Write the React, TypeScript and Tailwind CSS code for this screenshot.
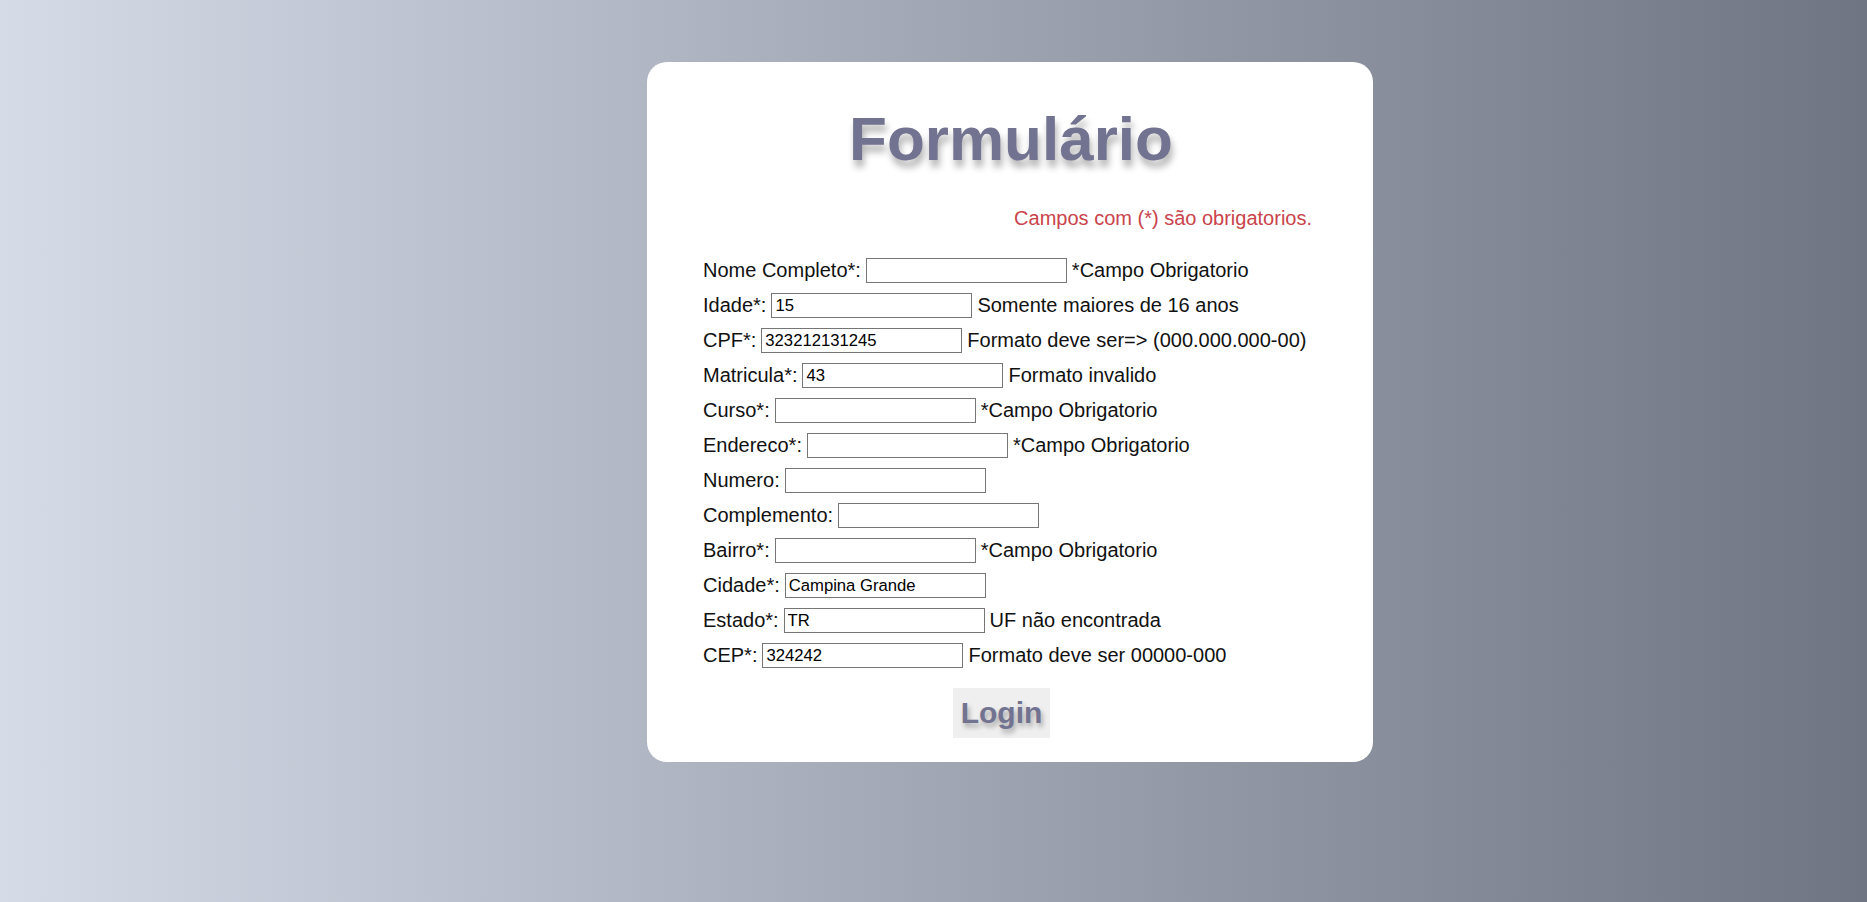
import * as React from "react";

type Field = {
  label: string;
  value?: string;
  msg?: string;
};

const fields: Field[] = [
  { label: "Nome Completo*:", msg: "*Campo Obrigatorio" },
  { label: "Idade*:", value: "15", msg: "Somente maiores de 16 anos" },
  { label: "CPF*:", value: "323212131245", msg: "Formato deve ser=> (000.000.000-00)" },
  { label: "Matricula*:", value: "43", msg: "Formato invalido" },
  { label: "Curso*:", msg: "*Campo Obrigatorio" },
  { label: "Endereco*:", msg: "*Campo Obrigatorio" },
  { label: "Numero:" },
  { label: "Complemento:" },
  { label: "Bairro*:", msg: "*Campo Obrigatorio" },
  { label: "Cidade*:", value: "Campina Grande" },
  { label: "Estado*:", value: "TR", msg: "UF não encontrada" },
  { label: "CEP*:", value: "324242", msg: "Formato deve ser 00000-000" },
];

export default function App() {
  return (
    <div className="min-h-screen w-full bg-gradient-to-r from-[#d5dce8] to-[#6f7582] pt-[62px] pb-[140px] font-['Liberation_Sans',Arial,sans-serif]">
      <div className="ml-[647px] w-[726px] h-[700px] rounded-[20px] bg-white pl-[56px] pr-[58px] pt-[42px] pb-[23px]">
        <h1 className="text-center text-[62px] font-bold leading-[69px] text-[#727291] pl-[4px] [text-shadow:2px_7px_7px_rgba(0,0,0,0.3)]">
          Formulário
        </h1>

        <p className="mt-[34px] text-right pr-[3px] text-[20px] leading-[23px] text-[#c9434b]">
          Campos com (*) são obrigatorios.
        </p>

        <form className="mt-[28px] flex flex-col gap-[10px]" onSubmit={(e) => e.preventDefault()}>
          {fields.map((f) => (
            <div key={f.label} className="flex h-[25px] items-center gap-[5px] text-[20px] leading-[23px] text-[#111]">
              <label className="whitespace-nowrap">{f.label}</label>
              <input
                type="text"
                defaultValue={f.value ?? ""}
                className="h-[25px] w-[201px] shrink-0 border border-[#767676] bg-white px-[3px] text-[16.67px] text-black outline-none"
              />
              {f.msg && <span className="whitespace-nowrap">{f.msg}</span>}
            </div>
          ))}

          <div className="mt-[10px] pl-[250px]">
            <button
              type="submit"
              className="h-[50px] w-[97px] bg-[#efefef] text-[30px] font-bold leading-[34px] text-[#727291] [text-shadow:2px_4px_5px_rgba(0,0,0,0.3)]"
            >
              Login
            </button>
          </div>
        </form>
      </div>
    </div>
  );
}
